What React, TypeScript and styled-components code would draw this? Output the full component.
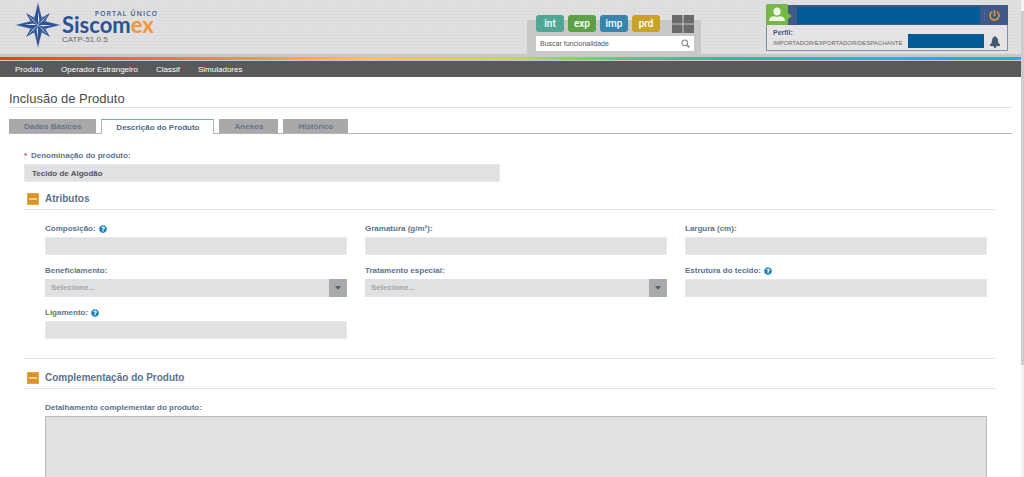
import React, { useId } from "react";
import styled, { createGlobalStyle } from "styled-components";
import { FaPowerOff, FaQuestionCircle } from "react-icons/fa";

const GlobalStyle = createGlobalStyle`
  *, *::before, *::after { box-sizing: border-box; }
  html, body { margin: 0; padding: 0; background: #fff; }
  body, button, input, select, textarea {
    font-family: "Liberation Sans", Arial, sans-serif;
    font-size: 8px;
    line-height: 12px;
  }
`;

const Window = styled.div`
  display: flex;
  height: 100vh;
  overflow: hidden;
`;

const Page = styled.div`
  flex: 1;
  min-width: 0;
`;

const ScrollTrack = styled.div`
  width: 3px;
  padding-top: 11px;
  background: #f3f3f3;
`;

const ScrollThumb = styled.div`
  height: 76%;
  background: #cdcdcd;
`;

const Header = styled.header`
  display: grid;
  grid-template-columns: 1fr 174px 320px;
  align-items: end;
  height: 57px;
  border-bottom: 3px solid #c9c8c9;
  background-color: #e1e1e1;
  background-image:
    repeating-linear-gradient(90deg, rgba(0, 0, 0, 0.02) 0 1px, transparent 1px 3px),
    repeating-linear-gradient(0deg, rgba(0, 0, 0, 0.02) 0 1px, transparent 1px 3px);
`;

const Logo = styled.a`
  display: flex;
  align-self: start;
  gap: 1px;
  padding: 2px 0 0 15px;
  text-decoration: none;
`;

const LogoText = styled.span`
  display: flex;
  flex-direction: column;
  width: 96px;
  padding-top: 8px;
`;

const LogoOverline = styled.span`
  align-self: flex-end;
  color: #3f5f96;
  font: 600 7px/7px "Open Sans", sans-serif;
  letter-spacing: 1px;
`;

const Wordmark = styled.span`
  margin-top: 1px;
  color: #2b5196;
  font: 900 22px/14px Lato, sans-serif;
  font-weight: 700;

  em {
    color: #f59537;
    font-style: normal;
  }
`;

const Version = styled.span`
  margin-top: 4px;
  color: #68686c;
  line-height: 8px;
`;

const SearchPanel = styled.form`
  display: flex;
  flex-direction: column;
  gap: 4px;
  height: 34px;
  padding: 0 7px 0 9px;
  background: #cac7c8;
`;

const ModuleRow = styled.div`
  display: flex;
  gap: 4px;
  height: 17px;
  margin-top: -5px;
  flex: none;
`;

const ModuleButton = styled.button<{ $color: string }>`
  width: 28px;
  height: 17px;
  padding: 0;
  border: 0;
  border-radius: 3px;
  background: ${(p) => p.$color};
  color: #fff;
  font: 500 10px/16px Roboto, sans-serif;
`;

const GridButton = styled.button`
  width: 22px;
  height: 18px;
  margin-left: auto;
  padding: 0;
  border: 0;
  background: none;

  svg { display: block; }
`;

const SearchBox = styled.div`
  display: flex;
  align-items: center;
  height: 15px;
  padding: 0 4px;
  background: #fff;

  input {
    flex: 1;
    min-width: 0;
    padding: 0;
    border: 0;
    outline: 0;
    background: none;
    font-size: 7px;
  }
  input::placeholder { color: #555; opacity: 1; }
  button {
    display: flex;
    padding: 0;
    border: 0;
    background: none;
  }
`;

const UserPanel = styled.section`
  justify-self: end;
  align-self: start;
  width: 242px;
  height: 46px;
  margin: 5px 13px 0 0;
  border: 1px solid #7d91b8;
  border-top: 0;
  background: #e6e3e4;
`;

const UserBar = styled.div`
  display: flex;
  align-items: center;
  height: 20px;
  margin: 0 -1px;
  padding-right: 8px;
  background: #405888;
`;

const Avatar = styled.svg`
  flex: none;
  margin-top: -1px;
`;

const Redacted = styled.div<{ $height: number }>`
  flex: 1;
  height: ${(p) => p.$height}px;
  background: #005b98;
`;

const PowerButton = styled.button`
  display: flex;
  margin-left: 4px;
  padding: 0 0 0 4px;
  border: 0;
  border-left: 1px solid #53689a;
  background: none;
  color: #d9952f;
`;

const ProfileRow = styled.div`
  display: flex;
  align-items: flex-end;
  gap: 6px;
  padding: 3px 7px 0 6px;
  color: #666;
  font-size: 6px;
  line-height: 10px;

  strong {
    display: block;
    color: #3f5789;
    font-size: 7px;
  }
`;

const Rainbow = styled.div`
  height: 4px;
  border-bottom: 1px solid #c8c8c8;
  background: linear-gradient(90deg, #f5391c 0%, #f98232 20%, #fbc63c 36%, #c5dc3c 50%, #4cc98a 62%, #22c09c 72%, #18b5e0 88%, #18b0e8 100%);
`;

const Nav = styled.nav`
  display: flex;
  gap: 18px;
  padding: 3px 15px 1px;
  background: #58595b;

  a {
    color: #fff;
    text-decoration: none;
  }
`;

const Main = styled.main`
  padding: 14px 9px 0;
`;

const Title = styled.h1`
  margin: 0;
  border-bottom: 1px solid #e0e0e0;
  color: #4a4a4a;
  font-size: 13px;
  font-weight: 400;
  line-height: 16px;
`;

const Tabs = styled.div`
  display: flex;
  gap: 5px;
  height: 15px;
  margin-top: 11px;
  border-bottom: 1px solid #b5b5b5;
`;

const Tab = styled.button<{ $active?: boolean }>`
  height: ${(p) => (p.$active ? 15 : 14)}px;
  padding: 1px 14px 0;
  border-style: solid;
  border-width: 1px 1px 0;
  border-color: ${(p) => (p.$active ? "#5fb0d6 #b5b5b5" : "#a9a9a9")};
  background: ${(p) => (p.$active ? "#fff" : "#a9a9a9")};
  color: ${(p) => (p.$active ? "#4f6b88" : "#62758b")};
  font-weight: 700;
`;

const Panel = styled.div`
  padding: 15px 16px 0 15px;
`;

const FieldBox = styled.div<{ $half?: boolean }>`
  width: ${(p) => (p.$half ? "49%" : "auto")};
  min-width: 0;
`;

const Label = styled.label`
  display: flex;
  align-items: center;
  gap: 3px;
  height: 13px;
  margin-bottom: 2px;
  padding-top: 1px;
  color: #5c738c;
  font-weight: 700;

  svg { color: #1d82b5; }
`;

const Required = styled.span`
  width: 4px;
  color: #e04040;
`;

const TextInput = styled.input`
  display: block;
  width: 100%;
  height: 18px;
  padding: 0 7px;
  border: 1px solid #e8e9ea;
  border-radius: 0;
  background: #e0e1e2;
  color: #555;
  font-weight: 700;
`;

const SelectBox = styled.div`
  display: flex;
  position: relative;

  select {
    width: 100%;
    height: 18px;
    padding: 0 24px 0 6px;
    border: 0;
    border-radius: 0;
    background: #e0e1e2;
    color: #a3a5a8;
    font-weight: 700;
    appearance: none;
  }
`;

const SelectArrow = styled.span`
  display: flex;
  position: absolute;
  inset: 0 0 0 auto;
  align-items: center;
  justify-content: center;
  width: 18px;
  background: #a8a9aa;
  pointer-events: none;
`;

const SectionHeading = styled.h2`
  display: flex;
  align-items: center;
  gap: 6px;
  height: 22px;
  margin: 0;
  padding: 1px 0 0 3px;
  border-bottom: 1px solid #e3e3e3;
  color: #5c738c;
  font-size: 10px;
`;

const CollapseButton = styled.button`
  display: grid;
  place-items: center;
  width: 12px;
  height: 12px;
  padding: 0;
  border: 1px solid #e3a84e;
  background: #db9323;
`;

const Section = styled.section<{ $ruled?: boolean }>`
  margin-top: 6px;
  padding-bottom: ${(p) => (p.$ruled ? 19 : 0)}px;
  border-bottom: ${(p) => (p.$ruled ? "1px solid #e3e3e3" : "0")};

  & + & { margin-top: 8px; }
`;

const FieldGrid = styled.div`
  display: grid;
  grid-template-columns: repeat(3, minmax(0, 1fr));
  gap: 9px 18px;
  padding: 12px 9px 0 21px;
`;

const DetailArea = styled.div`
  padding: 12px 9px 0 21px;
`;

const TextArea = styled.textarea`
  display: block;
  width: 100%;
  height: 120px;
  border: 1px solid #b9bbba;
  background: #e0e1e2;
  resize: none;
`;

function CompassStar() {
  return (
    <svg width="46" height="46" viewBox="0 0 46 46" aria-hidden="true">
      <circle cx="23" cy="23" r="9" fill="none" stroke="#4c6ba6" strokeWidth="1" />
      {[45, 135, 225, 315].map((angle) => (
        <g key={angle} transform={`rotate(${angle} 23 23)`}>
          <path d="M23 6L26.2 18L23 23L19.8 18Z" fill="#2b5196" />
          <path d="M23 11V19" stroke="#dfe3ea" strokeWidth="0.7" />
        </g>
      ))}
      {[0, 90, 180, 270].map((angle) => (
        <g key={angle} transform={`rotate(${angle} 23 23)`}>
          <path d="M23 0L27.4 18L23 23L18.6 18Z" fill="#2b5196" stroke="#e0e0e0" strokeWidth="0.4" />
          <path d="M23 9L23 22L24.4 18Z" fill="#e4e8ef" />
        </g>
      ))}
    </svg>
  );
}

type FieldProps = { label: string; help?: boolean; select?: boolean; required?: boolean; value?: string };

function Field({ label, help, select, required, value }: FieldProps) {
  const id = useId();
  return (
    <FieldBox $half={required}>
      <Label htmlFor={id}>
        {required && <Required>*</Required>}
        {label}
        {help && <FaQuestionCircle size={8} />}
      </Label>
      {select ? (
        <SelectBox>
          <select id={id}>
            <option>Selecione...</option>
          </select>
          <SelectArrow>
            <svg width="6" height="4" viewBox="0 0 6 4"><path d="M0 0H6L3 4Z" fill="#4a607e" /></svg>
          </SelectArrow>
        </SelectBox>
      ) : (
        <TextInput id={id} type="text" defaultValue={value} />
      )}
    </FieldBox>
  );
}

function Heading({ children }: { children: React.ReactNode }) {
  return (
    <SectionHeading>
      <CollapseButton type="button" aria-label="Recolher">
        <svg width="8" height="2" viewBox="0 0 8 2"><path d="M0 1H8" stroke="#fbe8c8" strokeWidth="1.4" /></svg>
      </CollapseButton>
      {children}
    </SectionHeading>
  );
}

const modules = [
  { name: "int", color: "#52a694" },
  { name: "exp", color: "#5aa245" },
  { name: "imp", color: "#3984ad" },
  { name: "prd", color: "#c9a227" },
];

export default function App() {
  const detailId = useId();
  return (
    <Window>
      <GlobalStyle />
      <Page>
        <Header>
          <Logo href="#">
            <CompassStar />
            <LogoText>
              <LogoOverline>PORTAL ÚNICO</LogoOverline>
              <Wordmark>Siscom<em>ex</em></Wordmark>
              <Version>CATP-51.0.5</Version>
            </LogoText>
          </Logo>
          <SearchPanel>
            <ModuleRow>
              {modules.map((m) => (
                <ModuleButton key={m.name} type="button" $color={m.color}>{m.name}</ModuleButton>
              ))}
              <GridButton type="button" aria-label="Módulos">
                <svg width="22" height="18" viewBox="0 0 22 18" fill="#6a6a6c">
                  <path d="M0 0H10.5V8.5H0ZM11.5 0H22V8.5H11.5ZM0 9.5H10.5V18H0ZM11.5 9.5H22V18H11.5Z" />
                </svg>
              </GridButton>
            </ModuleRow>
            <SearchBox>
              <input type="text" aria-label="Buscar funcionalidade" placeholder="Buscar funcionalidade" />
              <button type="button" aria-label="Buscar">
                <svg width="9" height="9" viewBox="0 0 9 9" fill="none" stroke="#8a8a8a" strokeWidth="1.1">
                  <circle cx="3.8" cy="3.8" r="2.8" />
                  <path d="M5.9 5.9L8.4 8.4" strokeWidth="1.5" />
                </svg>
              </button>
            </SearchBox>
          </SearchPanel>
          <UserPanel>
            <UserBar>
              <Avatar width="31" height="21" viewBox="0 0 31 21" aria-hidden="true">
                <path d="M0 2Q0 0 2 0H20Q22 0 22 2V9L26 12L22 15V21H0Z" fill="#76b843" />
                <ellipse cx="11" cy="7.5" rx="3.6" ry="4" fill="#eef5e8" />
                <path d="M3 17Q3 12.4 8.5 12.2Q11 13.4 13.5 12.2Q19 12.4 19 17Z" fill="#eef5e8" />
              </Avatar>
              <Redacted $height={17} />
              <PowerButton type="button" aria-label="Sair"><FaPowerOff size={11} /></PowerButton>
            </UserBar>
            <ProfileRow>
              <div>
                <strong>Perfil:</strong>
                IMPORTADOR/EXPORTADOR/DESPACHANTE
              </div>
              <Redacted $height={14} />
              <svg width="10" height="12" viewBox="0 0 10 12" fill="#435a78" aria-hidden="true">
                <path d="M5 0C5.6 0 5.9 .4 5.9 1C7.4 1.6 8 3 8.1 5C8.2 7 8.8 7.6 10 8.4V10H0V8.4C1.2 7.6 1.8 7 1.9 5C2 3 2.6 1.6 4.1 1C4.1 .4 4.4 0 5 0ZM3.4 10H6.6Q6.4 12 5 12Q3.6 12 3.4 10Z" />
              </svg>
            </ProfileRow>
          </UserPanel>
        </Header>
        <Rainbow />
        <Nav>
          <a href="#">Produto</a>
          <a href="#">Operador Estrangeiro</a>
          <a href="#">Classif</a>
          <a href="#">Simuladores</a>
        </Nav>
        <Main>
          <Title>Inclusão de Produto</Title>
          <Tabs role="tablist">
            <Tab role="tab">Dados Básicos</Tab>
            <Tab role="tab" aria-selected="true" $active>Descrição do Produto</Tab>
            <Tab role="tab">Anexos</Tab>
            <Tab role="tab">Histórico</Tab>
          </Tabs>
          <Panel>
            <Field label="Denominação do produto:" required value="Tecido de Algodão" />
            <Section $ruled>
              <Heading>Atributos</Heading>
              <FieldGrid>
                <Field label="Composição:" help />
                <Field label="Gramatura (g/m²):" />
                <Field label="Largura (cm):" />
                <Field label="Beneficiamento:" select />
                <Field label="Tratamento especial:" select />
                <Field label="Estrutura do tecido:" help />
                <Field label="Ligamento:" help />
              </FieldGrid>
            </Section>
            <Section>
              <Heading>Complementação do Produto</Heading>
              <DetailArea>
                <Label htmlFor={detailId}>Detalhamento complementar do produto:</Label>
                <TextArea id={detailId} />
              </DetailArea>
            </Section>
          </Panel>
        </Main>
      </Page>
      <ScrollTrack>
        <ScrollThumb />
      </ScrollTrack>
    </Window>
  );
}
